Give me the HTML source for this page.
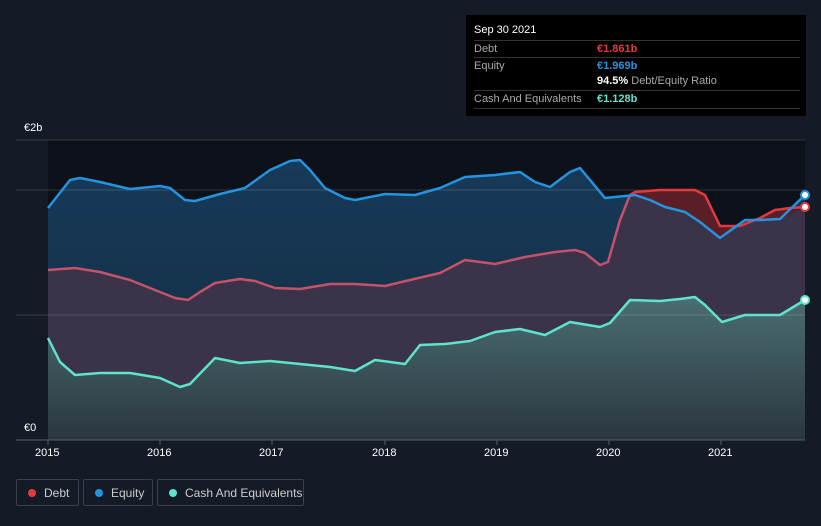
<!DOCTYPE html>
<html><head><meta charset="utf-8"><style>
body{margin:0;width:821px;height:526px;background:#151b26;font-family:"Liberation Sans",sans-serif;overflow:hidden;position:relative}
.tip{position:absolute;left:466px;top:15px;width:340px;height:101px;background:#000;color:#fff;font-size:11px}
.tip .r{position:absolute;left:8px;right:6px;height:17px;line-height:17px;border-top:1px solid #333}
.tip .l{color:#aaa}
.tip .v{position:absolute;left:123px;top:0;font-weight:bold}
.leg{position:absolute;top:479px;height:27px;border:1px solid #3a404c;border-radius:2px;color:#ccc;font-size:12px;line-height:27px;box-sizing:border-box}
.leg i{display:inline-block;width:8px;height:8px;border-radius:50%;margin:0 8px 0 11px;vertical-align:-0px}
.ax{position:absolute;color:#fff;font-size:11px}
</style></head><body>
<svg width="821" height="526" style="position:absolute;left:0;top:0">
<defs>
<linearGradient id="cg" x1="0" y1="0" x2="0" y2="1"><stop offset="0" stop-color="#4a6e72"/><stop offset="1" stop-color="#2b3640"/></linearGradient>
<linearGradient id="eg" x1="0" y1="0" x2="0" y2="1"><stop offset="0" stop-color="#173a58"/><stop offset="1" stop-color="#132b40"/></linearGradient>
</defs>
<rect x="48" y="140" width="757" height="300" fill="#0d1119"/>
<polygon fill="url(#eg)" points="48,208 70,180 80,178 100,182 130,189 160,186 170,188 185,200 195,201 220,194 245,188 270,170 290,161 300,160 310,170 325,188 345,198 355,200 385,194 415,195 440,188 465,177 495,175 520,172 535,182 550,187 570,172 580,168 590,180 605,198 625,196 635,195 650,200 665,207 685,212 700,222 720,238 745,220 760,220 780,219 805,195 805,440 48,440"/>
<polygon fill="#5a1f26" points="635,192 660,190 695,190 705,195 720,226 740,226 760,218 775,210 790,208 805,207 805,440 635,440"/>
<polygon fill="#3a3349" points="48,270 75,268 100,272 130,280 160,292 175,298 188,300 200,292 215,283 240,279 255,281 275,288 300,289 330,284 355,284 385,286 410,280 440,273 465,260 495,264 525,257 555,252 575,250 585,253 600,265 608,262 620,220 630,195 635,195 650,200 665,207 685,212 700,222 720,238 745,220 760,220 780,219 805,207 805,440 48,440"/>
<polygon fill="url(#cg)" points="48,338 60,362 75,375 100,373 130,373 160,378 180,387 190,384 215,358 240,363 270,361 300,364 330,367 355,371 375,360 390,362 405,364 420,345 445,344 470,341 495,332 520,329 545,335 570,322 600,327 610,323 630,300 660,301 680,299 695,297 705,305 722,322 745,315 780,315 805,300 805,440 48,440"/>
<g stroke="#ffffff" stroke-opacity="0.15" stroke-width="1"><line x1="16" y1="140" x2="805" y2="140"/><line x1="16" y1="190" x2="805" y2="190"/><line x1="16" y1="315" x2="805" y2="315"/></g>
<line x1="16" y1="440" x2="805" y2="440" stroke="#555c66"/>
<g fill="none" stroke-width="2.5" stroke-linejoin="round">
<polyline stroke="#c4526a" points="48,270 75,268 100,272 130,280 160,292 175,298 188,300 200,292 215,283 240,279 255,281 275,288 300,289 330,284 355,284 385,286 410,280 440,273 465,260 495,264 525,257 555,252 575,250 585,253 600,265 608,262 620,220 630,195"/>
<polyline stroke="#e5393f" points="630,195 635,192 660,190 695,190 705,195 720,226 740,226 760,218 775,210 790,208 805,207"/>
<polyline stroke="#2394df" points="48,208 70,180 80,178 100,182 130,189 160,186 170,188 185,200 195,201 220,194 245,188 270,170 290,161 300,160 310,170 325,188 345,198 355,200 385,194 415,195 440,188 465,177 495,175 520,172 535,182 550,187 570,172 580,168 590,180 605,198 625,196 635,195 650,200 665,207 685,212 700,222 720,238 745,220 760,220 780,219 805,195"/>
<polyline stroke="#5ee3cc" points="48,338 60,362 75,375 100,373 130,373 160,378 180,387 190,384 215,358 240,363 270,361 300,364 330,367 355,371 375,360 390,362 405,364 420,345 445,344 470,341 495,332 520,329 545,335 570,322 600,327 610,323 630,300 660,301 680,299 695,297 705,305 722,322 745,315 780,315 805,300"/>
</g>
<circle cx="805" cy="195" r="4" fill="#fff" stroke="#2394df" stroke-width="2"/>
<circle cx="805" cy="207" r="4" fill="#fff" stroke="#e5393f" stroke-width="2"/>
<circle cx="805" cy="300" r="4" fill="#fff" stroke="#5ee3cc" stroke-width="2"/>
<g stroke="#555c66"><line x1="48" y1="440" x2="48" y2="445"/><line x1="160" y1="440" x2="160" y2="445"/><line x1="272" y1="440" x2="272" y2="445"/><line x1="385" y1="440" x2="385" y2="445"/><line x1="497" y1="440" x2="497" y2="445"/><line x1="609" y1="440" x2="609" y2="445"/><line x1="721" y1="440" x2="721" y2="445"/></g>
</svg>
<div class="ax" style="left:24px;top:122px">€2b</div>
<div class="ax" style="left:24px;top:422px">€0</div>
<div class="ax" style="left:35px;top:447px">2015</div>
<div class="ax" style="left:147px;top:447px">2016</div>
<div class="ax" style="left:259px;top:447px">2017</div>
<div class="ax" style="left:372px;top:447px">2018</div>
<div class="ax" style="left:484px;top:447px">2019</div>
<div class="ax" style="left:596px;top:447px">2020</div>
<div class="ax" style="left:708px;top:447px">2021</div>
<div class="tip">
<div style="position:absolute;left:8px;top:9px;font-size:11px">Sep 30 2021</div>
<div class="r" style="top:25px"><span class="l">Debt</span><span class="v" style="color:#e5393f">€1.861b</span></div>
<div class="r" style="top:42px"><span class="l">Equity</span><span class="v" style="color:#2394df">€1.969b</span></div>
<div class="r" style="top:58px;border-top:none"><span class="v" style="color:#fff">94.5% <span style="color:#aaa;font-weight:normal">Debt/Equity Ratio</span></span></div>
<div class="r" style="top:75px;border-bottom:1px solid #333"><span class="l">Cash And Equivalents</span><span class="v" style="color:#5ee3cc">€1.128b</span></div>
</div>
<div class="leg" style="left:16px;width:63px"><i style="background:#e5393f"></i>Debt</div>
<div class="leg" style="left:83px;width:70px"><i style="background:#2394df"></i>Equity</div>
<div class="leg" style="left:157px;width:147px"><i style="background:#5ee3cc"></i>Cash And Equivalents</div>
</body></html>
